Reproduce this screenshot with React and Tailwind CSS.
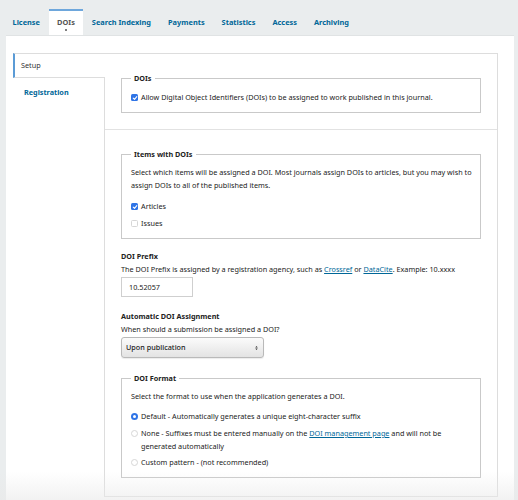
import React from "react";

const tabs = ["License", "DOIs", "Search Indexing", "Payments", "Statistics", "Access", "Archiving"];

function Check({ on }) {
  return on ? (
    <span className="w-[7px] h-[7px] rounded-[1.5px] bg-[#2f74e6] flex items-center justify-center shrink-0">
      <svg viewBox="0 0 10 10" className="w-[6px] h-[6px]">
        <path d="M2 5.2 L4.2 7.3 L8 2.8" fill="none" stroke="#fff" strokeWidth="1.8" strokeLinecap="round" strokeLinejoin="round" />
      </svg>
    </span>
  ) : (
    <span className="w-[7px] h-[7px] rounded-[1.5px] border border-[#d6d6d6] bg-white shrink-0" />
  );
}

function Radio({ on }) {
  return on ? (
    <span className="w-[7px] h-[7px] rounded-full bg-[#2f74e6] flex items-center justify-center shrink-0">
      <span className="w-[2.5px] h-[2.5px] rounded-full bg-white" />
    </span>
  ) : (
    <span className="w-[7px] h-[7px] rounded-full border border-[#d6d6d6] bg-white shrink-0" />
  );
}

function Box({ title, children }) {
  return (
    <fieldset className="border border-[#c9c9c9] pl-[9px] pr-[6px] pb-[8px]">
      <legend className="px-[3px] font-bold text-[#222] leading-[10px]">{title}</legend>
      {children}
    </fieldset>
  );
}

const A = ({ children }) => <span className="text-[#006798] underline">{children}</span>;

export default function App() {
  return (
    <div className="w-[518px] h-[500px] bg-[#eaedee] overflow-hidden relative flex flex-col text-[7.25px] text-[#222] font-['Noto_Sans',sans-serif]">
      {/* tab bar */}
      <div className="flex pl-[4px] pt-[9px] h-[35px] shrink-0 text-[7.4px]">
        {tabs.map((t) =>
          t === "DOIs" ? (
            <div key={t} className="relative bg-white border-t-2 border-[#6ea7dc] px-[8.5px] flex items-center text-[#555] font-bold">
              {t}
              <span className="absolute left-1/2 -translate-x-1/2 bottom-[4px] w-[2px] h-[2px] rounded-full bg-[#555]" />
            </div>
          ) : (
            <div key={t} className="px-[8.5px] flex items-center text-[#006798] font-bold pt-[2px]">
              {t}
            </div>
          )
        )}
      </div>

      {/* main white panel */}
      <div className="flex-1 ml-[6px] mr-[4px] bg-white border-t border-[#e0e3e4] flex pl-[7px] pr-[16px] pt-[17px] pb-[3px]">
        {/* side nav */}
        <div className="w-[91px] shrink-0 flex flex-col">
          <div className="h-[25px] border-l-2 border-[#5b9bd6] border-y border-y-[#dddddd] bg-white mr-[-1px] relative z-10 pl-[6px] flex items-center text-[#333]">
            Setup
          </div>
          <div className="h-[28px] pl-[11px] flex items-center text-[#006798] font-bold">Registration</div>
        </div>

        {/* content panel */}
        <div className="flex-1 border border-[#dddddd] flex flex-col">
          <div className="px-[16px] pt-[19px] pb-[16px] border-b border-[#e2e2e2]">
            <Box title="DOIs">
              <div className="flex items-center gap-[3px] leading-[13px] pt-[8px]">
                <Check on />
                <span>Allow Digital Object Identifiers (DOIs) to be assigned to work published in this journal.</span>
              </div>
            </Box>
          </div>

          <div className="px-[16px] pt-[19px] flex flex-col">
            <Box title="Items with DOIs">
              <p className="leading-[13px] pt-[7px]">
                Select which items will be assigned a DOI. Most journals assign DOIs to articles, but you may wish to assign DOIs to all of the published items.
              </p>
              <div className="flex flex-col gap-[4px] pt-[8px] leading-[13px]">
                <div className="flex items-center gap-[3px]">
                  <Check on />
                  <span>Articles</span>
                </div>
                <div className="flex items-center gap-[3px]">
                  <Check />
                  <span>Issues</span>
                </div>
              </div>
            </Box>

            <div className="pt-[11px] leading-[13px]">
              <div className="font-bold">DOI Prefix</div>
              <div>
                The DOI Prefix is assigned by a registration agency, such as <A>Crossref</A> or <A>DataCite</A>. Example: 10.xxxx
              </div>
              <div className="mt-[1px] w-[72px] h-[20px] border border-[#cfcfcf] flex items-center pl-[7px]">10.52057</div>
            </div>

            <div className="pt-[13px] leading-[13px]">
              <div className="font-bold">Automatic DOI Assignment</div>
              <div>When should a submission be assigned a DOI?</div>
              <div className="mt-[1px] w-[143px] h-[21px] rounded-[3px] border border-[#b9b9b9] bg-gradient-to-b from-[#fbfbfb] to-[#e3e3e3] shadow-[0_1px_1px_rgba(0,0,0,0.08)] flex items-center justify-between pl-[4px] pr-[5px] font-medium">
                <span>Upon publication</span>
                <svg viewBox="0 0 6 10" className="w-[3px] h-[6px]">
                  <path d="M0.5 4 L3 1 L5.5 4 Z M0.5 6 L3 9 L5.5 6 Z" fill="#333" />
                </svg>
              </div>
            </div>

            <div className="pt-[15px]">
              <Box title="DOI Format">
                <p className="leading-[13px] pt-[7px]">Select the format to use when the application generates a DOI.</p>
                <div className="flex flex-col gap-[4px] pt-[7px] leading-[13px]">
                  <div className="flex items-center gap-[3px]">
                    <Radio on />
                    <span>Default - Automatically generates a unique eight-character suffix</span>
                  </div>
                  <div className="flex items-start gap-[3px]">
                    <span className="h-[13px] flex items-center">
                      <Radio />
                    </span>
                    <span>
                      None - Suffixes must be entered manually on the <A>DOI management page</A> and will not be generated automatically
                    </span>
                  </div>
                  <div className="flex items-center gap-[3px] -mt-[1px]">
                    <Radio />
                    <span>Custom pattern - (not recommended)</span>
                  </div>
                </div>
              </Box>
            </div>
            <div className="h-[17px]" />
          </div>
        </div>
      </div>

      <div className="absolute left-0 right-0 bottom-0 h-[28px] bg-gradient-to-b from-white/0 to-[#e9e9e9]/60 pointer-events-none" />
    </div>
  );
}
